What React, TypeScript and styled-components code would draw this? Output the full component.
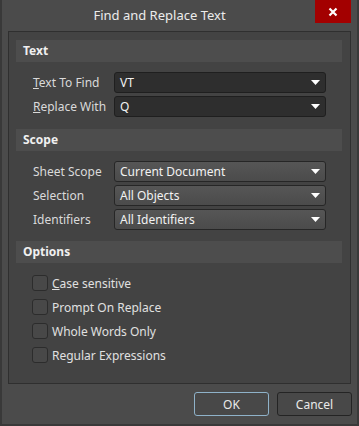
import React from 'react';
import styled, { createGlobalStyle } from 'styled-components';

const GlobalStyle = createGlobalStyle`
  html, body {
    margin: 0;
    padding: 0;
    background: #4b4b4b;
  }
  body {
    font-family: "Segoe UI", "Noto Sans", sans-serif;
    font-size: 12px;
    color: #e2e2e2;
  }
`;

const Window = styled.div`
  width: 359px;
  height: 426px;
  box-sizing: border-box;
  background: #4b4b4b;
  border: 2px solid #393939;
  border-top: none;
  display: flex;
  flex-direction: column;
`;

const TitleBar = styled.div`
  height: 31px;
  display: flex;
  align-items: flex-start;
  flex-shrink: 0;
`;

const Title = styled.div`
  flex: 1;
  text-align: center;
  line-height: 31px;
  font-size: 13px;
  color: #ececec;
  padding-left: 2px;
`;

const CloseButton = styled.div`
  width: 36px;
  height: 23px;
  margin-right: 6px;
  background: #a30000;
  display: flex;
  align-items: center;
  justify-content: center;
`;

const Panel = styled.div`
  flex: 1;
  margin: 0 6px;
  background: #434343;
  border: 1px solid #2f2f2f;
  padding: 8px 8px 0 7px;
`;

const SectionHeader = styled.div`
  height: 22px;
  line-height: 22px;
  background: #4d4d4d;
  padding-left: 7px;
  font-weight: bold;
  color: #f0f0f0;
`;

const SectionBody = styled.div<{ $top?: number; $bottom?: number; $gap?: number }>`
  display: flex;
  flex-direction: column;
  gap: ${({ $gap }) => $gap ?? 3}px;
  padding: ${({ $top }) => $top ?? 10}px 16px ${({ $bottom }) => $bottom ?? 12}px 16px;
`;

const FieldRow = styled.div`
  display: flex;
  align-items: center;
  height: 21px;
`;

const Label = styled.div`
  width: 81px;
  padding-left: 1px;
  color: #dadada;
`;

const Combo = styled.div<{ $editable?: boolean }>`
  flex: 1;
  height: 21px;
  box-sizing: border-box;
  border-radius: 3px;
  border: 1px solid ${({ $editable }) => ($editable ? '#1f1f1f' : '#262626')};
  background: ${({ $editable }) =>
    $editable ? '#2e2e2e' : 'linear-gradient(#565656, #4b4b4b)'};
  display: flex;
  align-items: center;
  padding: 0 5px;
  color: #f2f2f2;
`;

const ComboValue = styled.span`
  flex: 1;
`;

const CheckRow = styled.div`
  display: flex;
  align-items: center;
  height: 24px;
  gap: 4px;
  color: #e0e0e0;
`;

const Box = styled.div`
  width: 16px;
  height: 16px;
  box-sizing: border-box;
  border: 1px solid #2c2c2c;
  border-radius: 3px;
  background: #484848;
`;

const Footer = styled.div`
  display: flex;
  justify-content: flex-end;
  gap: 8px;
  padding: 8px 5px 8px 0;
  flex-shrink: 0;
`;

const Button = styled.div<{ $primary?: boolean }>`
  width: 75px;
  height: 24px;
  box-sizing: border-box;
  border-radius: 3px;
  border: 1px solid ${({ $primary }) => ($primary ? '#8fb2c9' : '#242424')};
  background: #484848;
  display: flex;
  align-items: center;
  justify-content: center;
  color: #eaeaea;
`;

const Arrow = () => (
  <svg width="9" height="5" viewBox="0 0 9 5">
    <path d="M0 0h9L4.5 5z" fill="#ffffff" />
  </svg>
);

const fields = [
  { key: 'T', rest: 'ext To Find', value: 'VT' },
  { key: 'R', rest: 'eplace With', value: 'Q' },
];

const scope = [
  { label: 'Sheet Scope', value: 'Current Document' },
  { label: 'Selection', value: 'All Objects' },
  { label: 'Identifiers', value: 'All Identifiers' },
];

const options = [
  { key: 'C', rest: 'ase sensitive' },
  { key: '', rest: 'Prompt On Replace' },
  { key: '', rest: 'Whole Words Only' },
  { key: '', rest: 'Regular Expressions' },
];

export default function App() {
  return (
    <>
      <GlobalStyle />
      <Window>
        <TitleBar>
          <Title>Find and Replace Text</Title>
          <CloseButton>
            <svg width="10" height="10" viewBox="0 0 10 10">
              <path d="M1.5 1.5l7 7M8.5 1.5l-7 7" stroke="#fff" strokeWidth="2.2" />
            </svg>
          </CloseButton>
        </TitleBar>
        <Panel>
          <SectionHeader>Text</SectionHeader>
          <SectionBody>
            {fields.map((f) => (
              <FieldRow key={f.key}>
                <Label>
                  <u>{f.key}</u>
                  {f.rest}
                </Label>
                <Combo $editable>
                  <ComboValue>{f.value}</ComboValue>
                  <Arrow />
                </Combo>
              </FieldRow>
            ))}
          </SectionBody>
          <SectionHeader>Scope</SectionHeader>
          <SectionBody $bottom={11}>
            {scope.map((s) => (
              <FieldRow key={s.label}>
                <Label>{s.label}</Label>
                <Combo>
                  <ComboValue>{s.value}</ComboValue>
                  <Arrow />
                </Combo>
              </FieldRow>
            ))}
          </SectionBody>
          <SectionHeader>Options</SectionHeader>
          <SectionBody $top={8} $gap={0}>
            {options.map((o) => (
              <CheckRow key={o.rest}>
                <Box />
                <span>
                  {o.key && <u>{o.key}</u>}
                  {o.rest}
                </span>
              </CheckRow>
            ))}
          </SectionBody>
        </Panel>
        <Footer>
          <Button $primary>OK</Button>
          <Button>Cancel</Button>
        </Footer>
      </Window>
    </>
  );
}
